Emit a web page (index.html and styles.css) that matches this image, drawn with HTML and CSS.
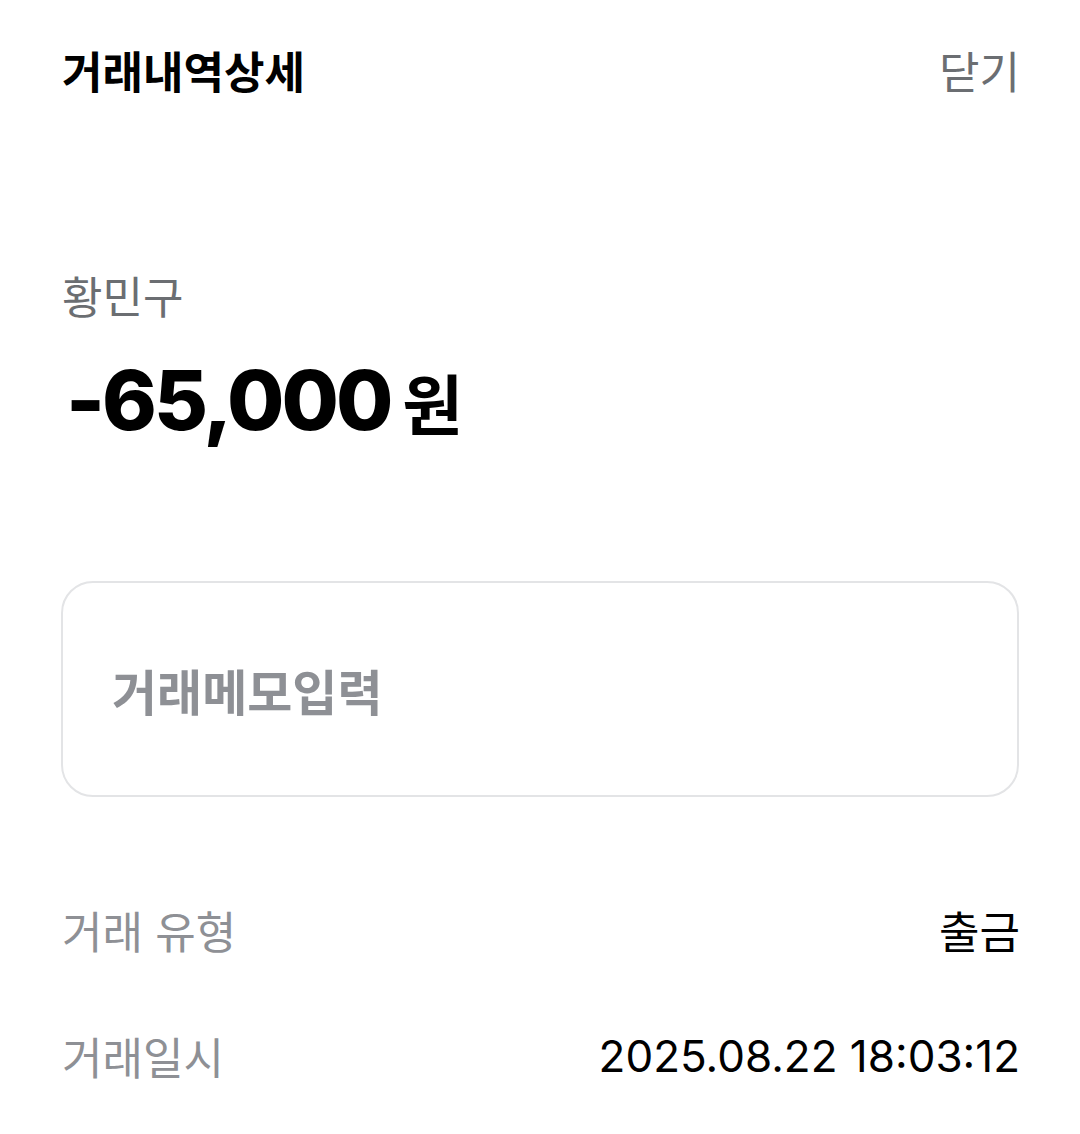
FILE: index.html
```html
<!DOCTYPE html>
<html lang="ko">
<head>
    <meta charset="UTF-8">
    <meta name="viewport" content="width=device-width, initial-scale=1.0">
    <title>거래내역상세</title>
    <link rel="stylesheet" href="styles.css">
</head>
<body>

<div class="sheet">
    <div class="sheet-header">
        <h1 class="sheet-title">거래내역상세</h1>
        <button class="close-btn">닫기</button>
    </div>

    <div class="summary">
        <p class="counterparty">황민구</p>
        <p class="amount"><span class="amount-num">-65,000</span><span class="amount-unit">원</span></p>
    </div>

    <div class="memo-box">
        <input class="memo-input" type="text" placeholder="거래메모입력">
    </div>

    <dl class="detail-list">
        <div class="detail-row">
            <dt>거래 유형</dt>
            <dd>출금</dd>
        </div>
        <div class="detail-row">
            <dt>거래일시</dt>
            <dd class="num">2025.08.22 18:03:12</dd>
        </div>
    </dl>
</div>

</body>
</html>
```

FILE: styles.css
```css
body {
    margin: 0;
    padding: 0;
    background: #fff;
    font-family: "Noto Sans CJK KR", "Noto Sans", sans-serif;
    color: #000;
}

.sheet {
    padding: 0 60px 0 62px;
}

.sheet-header {
    display: flex;
    justify-content: space-between;
    align-items: center;
    height: 140px;
}

.sheet-title {
    margin: 0;
    font-size: 44px;
    font-weight: 700;
}

.close-btn {
    background: none;
    border: none;
    padding: 0;
    font-family: inherit;
    font-size: 44px;
    color: #6b6e72;
    cursor: pointer;
}

.summary {
    padding-top: 127px;
}

.counterparty {
    margin: 0;
    font-size: 44px;
    line-height: 56px;
    color: #6b6e72;
}

.amount {
    margin: 37px 0 0 0;
    display: flex;
    align-items: baseline;
    line-height: 80px;
}

.amount-num {
    font-family: "Inter", "Liberation Sans", sans-serif;
    font-weight: 800;
    font-size: 83px;
    letter-spacing: -3px;
    padding-left: 4px;
}

.amount-unit {
    font-size: 66px;
    font-weight: 700;
    margin-left: 12px;
}

.memo-box {
    margin: 140px 1px 0 -1px;
    height: 212px;
    border: 2px solid #e3e4e6;
    border-radius: 32px;
    display: flex;
    align-items: center;
    padding: 0 49px;
}

.memo-input {
    width: 100%;
    border: none;
    outline: none;
    background: transparent;
    font-family: inherit;
    font-size: 49px;
    font-weight: 700;
    color: #000;
    padding: 0;
}

.memo-input::placeholder {
    color: #8e9095;
}

.detail-list {
    margin: 70px 0 0 0;
}

.detail-row {
    display: flex;
    justify-content: space-between;
    align-items: center;
    height: 126px;
}

.detail-row dt {
    font-size: 44px;
    color: #8e9095;
}

.detail-row dd {
    margin: 0;
    font-size: 44px;
}

.detail-row dd.num {
    font-family: "Inter", "Noto Sans CJK KR", sans-serif;
}
```
